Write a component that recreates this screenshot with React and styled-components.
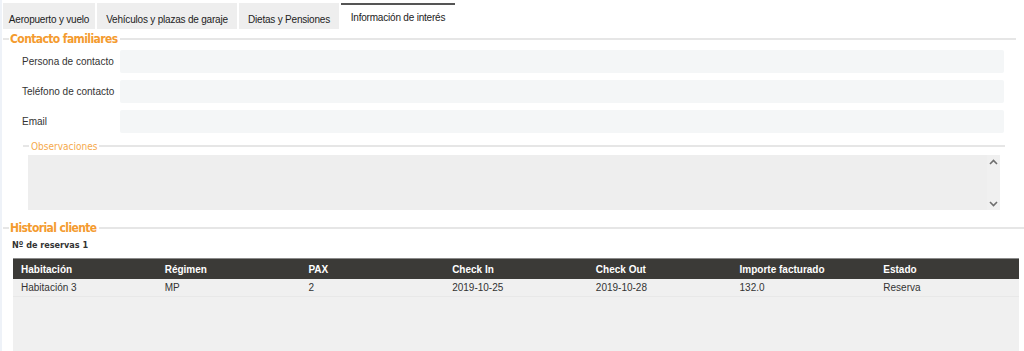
import React from "react";
import styled, { createGlobalStyle } from "styled-components";

const Global = createGlobalStyle`
  html, body { margin: 0; padding: 0; background: #fff; }
  body { font-family: "Liberation Sans", Arial, sans-serif; font-size: 10px; color: #333; }
`;

const Page = styled.div`
  width: 1024px;
  height: 351px;
  overflow: hidden;
  box-sizing: border-box;
  border-left: 2px solid #eef2f8;
  padding-left: 1px;
`;

const Tabs = styled.div`
  display: flex;
  gap: 2px;
  padding-top: 3px;
  height: 26px;
`;

const Tab = styled.div`
  display: flex;
  align-items: center;
  justify-content: center;
  width: ${(p) => p.$w}px;
  height: 26px;
  box-sizing: border-box;
  padding-top: ${(p) => (p.$active ? "0" : "4px")};
  background: ${(p) => (p.$active ? "#fff" : "#eeeeee")};
  border-top: 2px solid ${(p) => (p.$active ? "#555" : "#eeeeee")};
  color: #222;
  font-size: 10px;
  letter-spacing: -0.2px;
  white-space: nowrap;
`;

const SectionTitle = styled.div`
  display: flex;
  align-items: center;
  height: 14px;
  margin-top: ${(p) => p.$mt || 0}px;
  margin-right: ${(p) => p.$mr || 0}px;
  &::before {
    content: "";
    width: ${(p) => p.$lead || 6}px;
    height: 2px;
    background: #e6e6e6;
  }
  &::after {
    content: "";
    flex: 1;
    height: 2px;
    background: #e6e6e6;
  }
`;

const Legend = styled.span`
  font-family: "DejaVu Sans Condensed", "DejaVu Sans", sans-serif;
  font-weight: ${(p) => (p.$small ? 400 : 700)};
  font-size: ${(p) => (p.$small ? "10px" : "12px")};
  color: ${(p) => (p.$small ? "#f5a94c" : "#f49b2f")};
  padding: 0 2px 0 ${(p) => (p.$small ? 2 : 1)}px;
  letter-spacing: ${(p) => (p.$small ? "0" : "-0.6px")};
`;

const Form = styled.div`
  display: flex;
  flex-direction: column;
  gap: 7px;
  margin-top: 4px;
  padding-left: 19px;
  padding-right: 20px;
`;

const Row = styled.div`
  display: flex;
  align-items: center;
  height: 23px;
`;

const Label = styled.div`
  width: 98px;
  flex: none;
  white-space: nowrap;
  font-size: 10px;
  color: #333;
`;

const Input = styled.div`
  flex: 1;
  height: 23px;
  background: #f4f6f7;
  border-radius: 2px;
`;

const Obs = styled.div`
  margin: 6px 19px 0 20px;
`;

const TextArea = styled.div`
  margin: 2px 5px 0 5px;
  height: 55px;
  background: #eeeeee;
  display: flex;
  justify-content: flex-end;
`;

const ScrollBar = styled.div`
  width: 13px;
  background: #f0f0f0;
  display: flex;
  flex-direction: column;
  justify-content: space-between;
  align-items: center;
  padding: 4px 0 3px;
`;

const Count = styled.div`
  font-family: "DejaVu Sans Condensed", "DejaVu Sans", sans-serif;
  font-weight: 700;
  font-size: 9px;
  color: #333;
  margin: 4px 0 0 9px;
  height: 12px;
  line-height: 12px;
`;

const Table = styled.div`
  margin: 7px 5px 0 10px;
  background: #f0f0f0;
  height: 93px;
`;

const Grid = styled.div`
  display: grid;
  grid-template-columns: repeat(7, 1fr);
  align-items: center;
`;

const Head = styled(Grid)`
  background: #3b3a37;
  border-top: 1px solid #8a8a8a;
  box-sizing: border-box;
  height: 21px;
  color: #fff;
  font-weight: 700;
`;

const BodyRow = styled(Grid)`
  height: 17px;
  border-bottom: 1px solid #e8e8e8;
  color: #333;
`;

const Cell = styled.div`
  padding-left: 8px;
  font-size: 10px;
  white-space: nowrap;
`;

const Chevron = ({ up }) => (
  <svg width="9" height="6" viewBox="0 0 9 6">
    <path
      d={up ? "M1 5 L4.5 1.5 L8 5" : "M1 1 L4.5 4.5 L8 1"}
      fill="none"
      stroke="#6e6e6e"
      strokeWidth="1.6"
    />
  </svg>
);

const tabs = [
  { label: "Aeropuerto y vuelo", w: 92 },
  { label: "Vehículos y plazas de garaje", w: 140 },
  { label: "Dietas y Pensiones", w: 100 },
  { label: "Información de interés", w: 114, active: true },
];
const heads = ["Habitación", "Régimen", "PAX", "Check In", "Check Out", "Importe facturado", "Estado"];
const row = ["Habitación 3", "MP", "2", "2019-10-25", "2019-10-28", "132.0", "Reserva"];

export default function App() {
  return (
    <Page>
      <Global />
      <Tabs>
        {tabs.map((t) => (
          <Tab key={t.label} $w={t.w} $active={t.active}>{t.label}</Tab>
        ))}
      </Tabs>
      <SectionTitle $mt={3} $mr={8}>
        <Legend>Contacto familiares</Legend>
      </SectionTitle>
      <Form>
        <Row><Label>Persona de contacto</Label><Input /></Row>
        <Row><Label>Teléfono de contacto</Label><Input /></Row>
        <Row><Label>Email</Label><Input /></Row>
      </Form>
      <Obs>
        <SectionTitle $lead={6}>
          <Legend $small>Observaciones</Legend>
        </SectionTitle>
        <TextArea>
          <ScrollBar>
            <Chevron up />
            <Chevron />
          </ScrollBar>
        </TextArea>
      </Obs>
      <SectionTitle $mt={11}>
        <Legend>Historial cliente</Legend>
      </SectionTitle>
      <Count>Nº de reservas 1</Count>
      <Table>
        <Head>{heads.map((h) => <Cell key={h}>{h}</Cell>)}</Head>
        <BodyRow>{row.map((c, i) => <Cell key={i}>{c}</Cell>)}</BodyRow>
      </Table>
    </Page>
  );
}
